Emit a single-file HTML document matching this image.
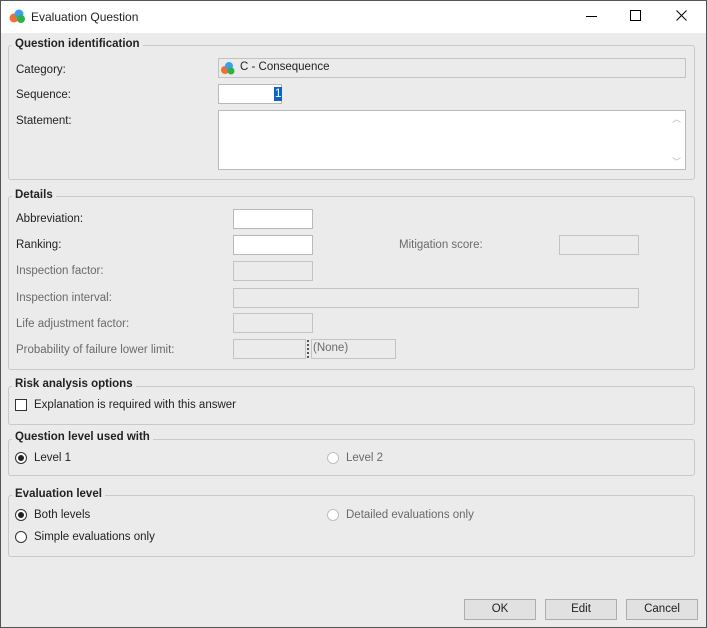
<!DOCTYPE html><html><head><style>
body{margin:0;width:707px;height:628px;overflow:hidden;font-family:"Liberation Sans",sans-serif;font-size:11.5px;color:#222;position:relative;background:#ebebeb}
.frame{position:absolute;left:0;top:0;width:705px;height:626px;border:1px solid #555;z-index:5}
.tb{position:absolute;left:0;top:0;width:707px;height:33px;background:#fff}
.a{position:absolute;white-space:nowrap}
.g{position:absolute;border:1px solid #c9c9c9;border-radius:3px}
.gt{position:absolute;font-weight:bold;background:#ebebeb;padding:0 3px;color:#222}
.in{position:absolute;background:#fff;border:1px solid #b9b9b9;box-sizing:border-box}
.dis{position:absolute;background:#ebebeb;border:1px solid #c3c3c3;box-sizing:border-box}
.d{color:#6a6a6a}
.rb{position:absolute;width:12px;height:12px;border:1px solid #333;border-radius:50%;background:#fff;box-sizing:border-box}
.rb.on::after{content:"";position:absolute;left:2px;top:2px;width:6px;height:6px;border-radius:50%;background:#222}
.rb.off{border-color:#c0c0c0}
.btn{position:absolute;top:599px;width:72px;height:21px;border:1px solid #adadad;background:#e1e1e1;box-sizing:border-box;text-align:center;line-height:19px}
</style></head><body><div class="frame"></div>
<div class="tb">
<svg class="a" style="left:9px;top:8px" width="18" height="16"><circle cx="5" cy="10" r="4.5" fill="#f07030"/><circle cx="10" cy="6" r="4.5" fill="#3aa0e8"/><circle cx="12" cy="11" r="4" fill="#2db04a"/></svg>
<div class="a" style="left:31px;top:10px;font-size:12px">Evaluation Question</div>
<div class="a" style="left:586px;top:16px;width:11px;height:1px;background:#000"></div>
<div class="a" style="left:630px;top:10px;width:9px;height:9px;border:1px solid #000"></div>
<svg class="a" style="left:676px;top:10px" width="11" height="11"><path d="M0.5 0.5L10.5 10.5M10.5 0.5L0.5 10.5" stroke="#000" stroke-width="1"/></svg>
</div>
<div class="g" style="left:8px;top:45px;width:685px;height:133px"></div>
<div class="gt" style="left:12px;top:38px">Question identification</div>
<div class="a" style="left:16px;top:64px">Category:</div>
<div class="dis" style="left:218px;top:58px;width:468px;height:20px"></div>
<svg class="a" style="left:220px;top:61px" width="16" height="15"><circle cx="5" cy="9" r="4" fill="#f07030"/><circle cx="9" cy="5" r="4" fill="#3aa0e8"/><circle cx="11" cy="10" r="3.5" fill="#2db04a"/></svg>
<div class="a" style="left:240px;top:61px">C - Consequence</div>
<div class="a" style="left:16px;top:89px">Sequence:</div>
<div class="in" style="left:218px;top:84px;width:64px;height:20px"></div>
<div class="a" style="left:274px;top:87px;background:#0a64c8;color:#fff;padding:0 1px;line-height:14px">1</div>
<div class="a" style="left:16px;top:115px">Statement:</div>
<div class="in" style="left:218px;top:110px;width:468px;height:60px"></div>
<div class="a d" style="left:672px;top:112px;font-size:9px;color:#bbb">︿</div>
<div class="a d" style="left:672px;top:155px;font-size:9px;color:#bbb">﹀</div>

<div class="g" style="left:8px;top:196px;width:685px;height:172px"></div>
<div class="gt" style="left:12px;top:189px">Details</div>
<div class="a" style="left:16px;top:213px">Abbreviation:</div>
<div class="in" style="left:233px;top:209px;width:80px;height:20px"></div>
<div class="a" style="left:16px;top:239px">Ranking:</div>
<div class="in" style="left:233px;top:235px;width:80px;height:20px"></div>
<div class="a d" style="left:399px;top:239px">Mitigation score:</div>
<div class="dis" style="left:559px;top:235px;width:80px;height:20px"></div>
<div class="a d" style="left:16px;top:265px">Inspection factor:</div>
<div class="dis" style="left:233px;top:261px;width:80px;height:20px"></div>
<div class="a d" style="left:16px;top:292px">Inspection interval:</div>
<div class="dis" style="left:233px;top:288px;width:406px;height:20px"></div>
<div class="a d" style="left:16px;top:318px">Life adjustment factor:</div>
<div class="dis" style="left:233px;top:313px;width:80px;height:20px"></div>
<div class="a d" style="left:16px;top:344px">Probability of failure lower limit:</div>
<div class="dis" style="left:233px;top:339px;width:73px;height:20px"></div>
<div class="a" style="left:307px;top:340px;width:2px;height:18px;border-left:2px dotted #555"></div>
<div class="dis" style="left:311px;top:339px;width:85px;height:20px"></div>
<div class="a d" style="left:313px;top:342px">(None)</div>

<div class="g" style="left:8px;top:386px;width:685px;height:37px"></div>
<div class="gt" style="left:12px;top:378px">Risk analysis options</div>
<div class="a" style="left:15px;top:399px;width:12px;height:12px;border:1px solid #333;background:#fff;box-sizing:border-box"></div>
<div class="a" style="left:34px;top:399px">Explanation is required with this answer</div>

<div class="g" style="left:8px;top:439px;width:685px;height:35px"></div>
<div class="gt" style="left:12px;top:431px">Question level used with</div>
<div class="rb on" style="left:15px;top:452px"></div><div class="a" style="left:34px;top:452px">Level 1</div>
<div class="rb off" style="left:327px;top:452px"></div><div class="a d" style="left:346px;top:452px">Level 2</div>

<div class="g" style="left:8px;top:495px;width:685px;height:60px"></div>
<div class="gt" style="left:12px;top:488px">Evaluation level</div>
<div class="rb on" style="left:15px;top:509px"></div><div class="a" style="left:34px;top:509px">Both levels</div>
<div class="rb off" style="left:327px;top:509px"></div><div class="a d" style="left:346px;top:509px">Detailed evaluations only</div>
<div class="rb" style="left:15px;top:531px"></div><div class="a" style="left:34px;top:531px">Simple evaluations only</div>

<div class="btn" style="left:464px">OK</div>
<div class="btn" style="left:545px">Edit</div>
<div class="btn" style="left:626px">Cancel</div>
</body></html>
